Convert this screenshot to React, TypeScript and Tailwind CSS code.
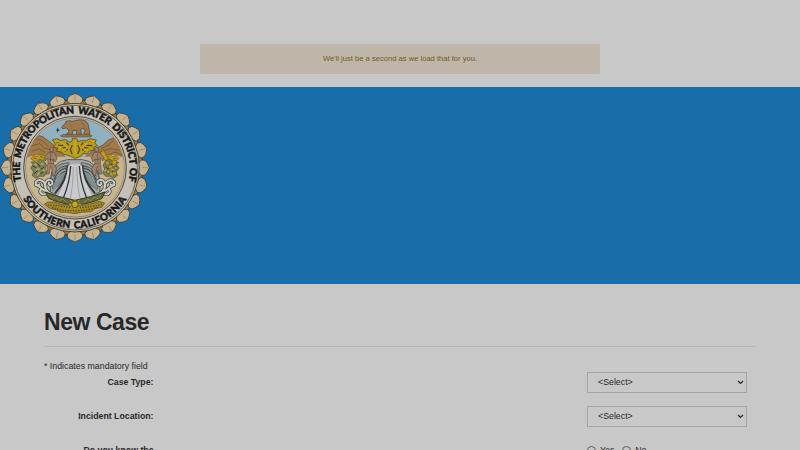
const CX = 225;
const CY = 245;

function Ring() {
  return (
    <>
      <circle cx={CX} cy={CY} r="203" fill="#98784a" stroke="#3b3022" strokeWidth="2.5" />
      {Array.from({ length: 24 }, (_, i) => (
        <g key={i} transform={`rotate(${i * 15} ${CX} ${CY})`}>
          <path
            d="M213 55 L202 46 L203 35 L212 28 L225 22 L238 28 L247 35 L248 46 L237 55 Z"
            fill="#c3b392"
            stroke="#40372b"
            strokeWidth="2.2"
          />
          <path d="M225 25 V44" stroke="#7d6b50" strokeWidth="1.5" />
        </g>
      ))}
      <circle cx={CX} cy={CY} r="193" fill="#c8b997" stroke="#2d2a25" strokeWidth="2.5" />
      <circle cx={CX} cy={CY} r="187" fill="#c4c0b6" stroke="#3a3833" strokeWidth="2" />
      <circle cx={CX} cy={CY} r="154" fill="#c5b79f" stroke="#33312c" strokeWidth="2.5" />
      <circle cx={CX} cy={CY} r="148" fill="#c8b897" stroke="#4a453b" strokeWidth="1.5" />
    </>
  );
}

function Eagle() {
  return (
    <g>
      <path
        d="M157 162 L170 158 L182 163 L197 161 L208 168 L216 166 L217 158 L226 156 L233 161 L233 167 L244 164 L258 164 L270 158 L289 162 L284 171 L293 179 L281 184 L283 193 L268 195 L262 204 L248 203 L242 211 L226 217 L211 211 L202 207 L191 205 L184 198 L170 196 L173 186 L160 184 L166 175 Z"
        fill="#b89c1c"
        stroke="#4c3d10"
        strokeWidth="2"
      />
      <path
        d="M169 168 L183 170 M174 178 L190 178 M183 188 L197 184 M195 197 L204 189 M199 169 L206 178 M275 168 L264 170 M277 179 L260 178 M268 188 L253 184 M255 198 L246 189 M250 169 L243 178 M217 178 L211 190 L216 204 M233 178 L239 190 L233 204"
        fill="none"
        stroke="#4b4013"
        strokeWidth="3.5"
      />
      <path d="M166 164 L188 172 L203 185 M284 164 L262 172 L247 185 M178 183 L201 196 M272 183 L249 196 M225 165 V207" stroke="#d3b525" strokeWidth="3" fill="none" />
    </g>
  );
}

function Figure() {
  return (
    <g fill="#a08269" stroke="#4d3c31" strokeWidth="1.6">
      <ellipse cx="155" cy="191" rx="6" ry="7" />
      <path d="M147 199 L163 199 L171 216 L166 228 L160 219 L161 234 L170 248 L164 268 L157 268 L156 251 L152 240 L147 264 L139 264 L144 232 L143 215 L136 225 L134 214 Z" />
      <path d="M152 202 V228 M146 219 L161 222 M146 232 L161 234" fill="none" />
    </g>
  );
}

function Foliage() {
  return (
    <g>
      <path d="M92 246 L99 236 L93 229 L106 226 L108 216 L118 222 L128 216 L134 228 L140 237 L135 249 L141 261 L132 271 L119 271 L108 277 L96 268 L101 258 Z" fill="#7b8059" stroke="#393b20" strokeWidth="1.6" />
      <path d="M92 218 L100 209 L111 212 L119 205 L132 207 L137 219 L128 223 L118 219 L110 230 L101 224 Z" fill="#bc981d" stroke="#65521b" strokeWidth="1.6" />
      <path d="M98 240 L108 245 M113 232 L120 242 M103 263 L113 254 M122 250 L133 243 M121 263 L130 259" fill="none" stroke="#343d27" strokeWidth="3" />
      <path d="M103 234 L110 238 M123 232 L130 237 M108 251 L119 248 M111 268 L119 259 M128 252 L136 254" fill="none" stroke="#c2ad67" strokeWidth="4" />
      <path d="M101 216 L109 218 M120 211 L130 215" stroke="#695717" strokeWidth="2.5" />
    </g>
  );
}

/* Yellow fruit that sits over the foliage on the right bank */
function Fruit() {
  return (
    <g fill="#bf9c20" stroke="#5b4818" strokeWidth="1.5">
      <path d="M300 204 L309 190 L317 204 L325 218 L316 224 Z" />
      <circle cx="322" cy="231" r="6" />
      <circle cx="343" cy="229" r="7" />
      <circle cx="331" cy="242" r="6" />
      <circle cx="347" cy="246" r="5" />
      <circle cx="325" cy="257" r="6" />
      <circle cx="343" cy="262" r="6" />
    </g>
  );
}

function Scroll() {
  const wave =
    "M162 327 C139 320 130 302 137 289 C143 277 160 281 157 292 C154 301 143 297 147 290 M137 315 C123 310 119 298 107 297 M137 304 C137 286 118 277 109 286 C103 294 112 302 118 295 M138 323 C123 330 116 317 124 309";
  return (
    <g fill="none" strokeLinecap="round">
      <path d={wave} stroke="#35413f" strokeWidth="10" />
      <path d={wave} stroke="#c9cbc4" strokeWidth="6" />
    </g>
  );
}

function WaterSide() {
  return (
    <g fill="none">
      <path d="M152 280 C157 247 174 232 207 230 L201 258 L176 300 L158 309 Z" fill="#858e8d" stroke="#454b4c" strokeWidth="2" />
      <path d="M160 273 C169 248 183 240 201 240 M162 282 C172 256 185 248 198 248 M161 291 C174 266 186 257 197 256" stroke="#33403f" strokeWidth="3" />
      <path d="M157 278 C164 253 179 240 201 235 M166 286 C177 262 186 254 196 252" stroke="#bec3c5" strokeWidth="2" />
      <path d="M192 263 C188 281 177 296 157 314" stroke="#779184" strokeWidth="5" />
      <path d="M203 238 C202 266 187 298 165 322" stroke="#2f363a" strokeWidth="6" />
      <path d="M207 239 C204 273 193 303 178 330" stroke="#ced0d3" strokeWidth="5" />
      <path d="M212 240 C210 278 201 310 190 336" stroke="#30373b" strokeWidth="4" />
    </g>
  );
}

function Seal() {
  return (
    <svg className="block h-40 w-[150px] shrink-0" viewBox="0 0 450 480" role="img" aria-label="District seal">
      <defs>
        <clipPath id="scene">
          <circle cx={CX} cy={CY} r="147" />
        </clipPath>
        <path id="upper" d="M64 285 A165 165 0 1 1 384.5 289" />
        <path id="lower" d="M69 338 A181 181 0 0 0 382 336" />
      </defs>
      <Ring />
      <g clipPath="url(#scene)">
        <rect x="75" y="92" width="300" height="125" fill="#91b1c1" />
        <path d="M70 215 L91 176 L105 160 L116 149 L130 153 L147 166 L170 184 L197 215 Z M250 218 L286 188 L309 177 L325 162 L345 154 L368 178 L390 218 Z" fill="#a17848" stroke="#59452c" strokeWidth="2" />
        <path d="M109 159 L127 164 L144 181 M91 180 L119 173 L133 186 L149 190 M95 196 L116 188 L135 199 M303 187 L325 178 L341 163 M301 197 L332 188 L360 193 M323 207 L344 198 L369 207" fill="none" stroke="#6c502d" strokeWidth="2" />
        <path d="M72 219 Q109 200 147 212 L312 212 Q342 200 380 219 V356 Q225 422 72 356 Z" fill="#c6b48d" />
        {/* Fan of water below the dam */}
        <path d="M151 282 Q155 226 202 221 L247 221 Q294 226 299 282 L300 320 Q260 347 225 349 Q184 344 151 320 Z" fill="#aaa9ad" stroke="#55565a" strokeWidth="3" />
        <path d="M211 235 Q199 288 174 329 L200 341 H250 L277 329 Q252 292 240 234 Z" fill="#c9c9cd" />
        <WaterSide />
        <g transform="translate(450 0) scale(-1 1)">
          <WaterSide />
        </g>
        <path d="M220 243 Q219 305 210 340 M230 243 Q232 306 241 340" fill="none" stroke="#8a8c91" strokeWidth="2" />
        <Foliage />
        <g transform="translate(449 0) scale(-1 1)">
          <Foliage />
        </g>
        <Fruit />
        <Eagle />
        <Figure />
        <g transform="translate(445 0) scale(-1 1)">
          <Figure />
        </g>
        <Scroll />
        <g transform="translate(450 0) scale(-1 1)">
          <Scroll />
        </g>
        <path d="M136 318 Q178 334 225 343 Q271 334 315 318 L306 337 Q274 352 225 358 Q178 352 146 337 Z" fill="#626934" stroke="#343a20" strokeWidth="3" />
        <path d="M150 329 L158 338 L167 333 L178 344 L188 338 L199 349 M303 327 L293 338 L283 333 L272 345 L263 339 L251 350" fill="none" stroke="#8d8f4a" strokeWidth="3" />
        <path d="M133 355 L143 348 L163 348 L181 354 L203 357 L215 362 L243 359 L269 354 L298 346 L314 351 L305 364 L285 368 L274 377 L247 379 L225 383 L200 379 L181 379 L169 372 L149 367 Z" fill="#a38627" stroke="#524519" strokeWidth="2" />
        <path d="M143 358 Q180 358 213 365 M239 365 Q275 363 308 354 M156 364 Q190 377 225 373 M226 375 Q272 372 297 362" stroke="#5a4e1c" strokeWidth="4" strokeDasharray="4 4" fill="none" />
        <g stroke="#c3a51c" strokeWidth="3">
          <path d="M225 338 V373 M206 355 H244 M211 343 L239 367 M211 367 L239 342" />
          <circle cx="225" cy="355" r="10" fill="#c3a622" stroke="#5b4c18" />
        </g>
      </g>
      {/* Grizzly on its ledge */}
      <path d="M187 128 C183 126 185 122 188 120 L195 113 L199 105 L205 105 L209 103 L215 106 L226 104 C242 99 256 102 262 110 C268 118 265 128 269 136 L270 145 H253 L252 139 L257 132 L248 128 L242 130 L244 145 H229 L231 134 L219 133 L216 146 H200 L201 142 L207 140 L205 131 L199 126 Z" fill="#a1784b" stroke="#4a3826" strokeWidth="2" />
      <path d="M211 112 L216 125 L211 134 M247 108 L252 122 L262 130" fill="none" stroke="#765536" strokeWidth="1.5" />
      <path d="M181 149 L191 145 H262 L277 149 L272 153 H187 Z" fill="#94703d" stroke="#60492d" strokeWidth="1.5" />
      <path d="M174 123 L170 131 L166 132 L171 134 L171 141 L175 135 L180 133 L175 130 Z" fill="#334145" />
      <g fill="#171716" stroke="#171716" strokeWidth="1.5" fontFamily="Lato, 'Liberation Sans', sans-serif" fontWeight="900" fontSize="30">
        <text wordSpacing="5">
          <textPath href="#upper" textLength="594" lengthAdjust="spacing">THE METROPOLITAN WATER DISTRICT OF</textPath>
        </text>
        <text wordSpacing="3">
          <textPath href="#lower" textLength="374" lengthAdjust="spacing">SOUTHERN CALIFORNIA</textPath>
        </text>
      </g>
    </svg>
  );
}

function SelectRow({ label }: { label: string }) {
  return (
    <div className="flex h-[33.5px] items-start">
      <label className="w-[109.5px] pt-[4.4px] text-right text-[8.75px] leading-3 font-bold">{label}</label>
      <div className="ml-[433.5px] flex h-[21px] w-[160px] items-center justify-between border border-[#a4a4a4] pr-[2px] pl-[10px] text-[8.8px]">
        <span className="pt-px">&lt;Select&gt;</span>
        <svg className="h-[5px] w-[7px]" viewBox="0 0 7 5" fill="none">
          <path d="M1 1 L3.5 3.5 L6 1" stroke="#292929" strokeWidth="1.2" />
        </svg>
      </div>
    </div>
  );
}

function Radio({ label }: { label: string }) {
  return (
    <span className="flex items-center gap-[4px]">
      <span className="h-[9px] w-[9px] rounded-full border border-[#606060]" />
      <span>{label}</span>
    </span>
  );
}

export default function App() {
  return (
    <div className="h-[450px] w-[800px] overflow-hidden bg-[#c8c8c8] font-['Liberation_Sans',sans-serif] text-[#282828]">
      <div className="flex h-[87px] justify-center pt-11">
        <div className="flex h-[30px] w-[400px] items-center justify-center rounded-[2px] bg-[#bdb6a9] text-[7.6px] text-[#7a5723]">
          <span>We'll just be a second as we load that for you.</span>
        </div>
      </div>
      <header className="flex h-[197px] items-start bg-[#196da8]">
        <div className="-mt-px">
          <Seal />
        </div>
      </header>
      <main className="px-11">
        <h1 className="h-[63px] border-b border-[#b6b6b6] pt-[24px] text-[23px] leading-7 font-bold tracking-[-0.45px]">New Case</h1>
        <p className="pt-[13px] text-[8.8px] leading-3">* Indicates mandatory field</p>
        <form>
          <SelectRow label="Case Type:" />
          <SelectRow label="Incident Location:" />
          <div className="flex items-start text-[8.75px] leading-3">
            <span className="w-[109.5px] pt-[5px] text-right font-bold">Do you know the</span>
            <div className="ml-[433.5px] flex gap-[8px] pt-[5px]">
              <Radio label="Yes" />
              <Radio label="No" />
            </div>
          </div>
        </form>
      </main>
    </div>
  );
}
